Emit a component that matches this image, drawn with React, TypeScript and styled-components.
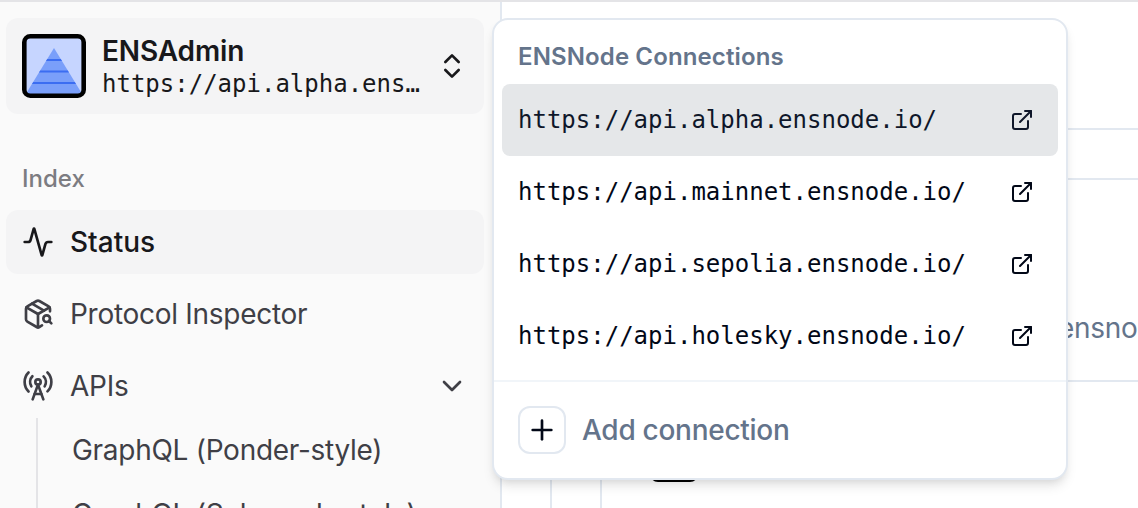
import React from "react";
import styled, { createGlobalStyle } from "styled-components";
import {
  Activity,
  ChevronDown,
  ChevronsUpDown,
  ExternalLink,
  PackageSearch,
  Plus,
  RadioTower,
} from "lucide-react";

const GlobalStyle = createGlobalStyle`
  * { box-sizing: border-box; }
  body {
    margin: 0;
    overflow: hidden;
    background: #fff;
    color: #020817;
    font-family: Inter, "Liberation Sans", sans-serif;
    -webkit-font-smoothing: antialiased;
  }
  svg { flex-shrink: 0; display: block; }
`;

const mono = `"DejaVu Sans Mono", "Liberation Mono", monospace`;

const Page = styled.div`
  position: relative;
  display: flex;
  width: 1138px;
  height: 508px;
  overflow: hidden;
  border-top: 2px solid #e4e4e7;
`;

const Sidebar = styled.aside`
  flex: 0 0 502px;
  padding: 16px 16px 0 6px;
  background: #fafafa;
  border-right: 2px solid #e2e8f0;
  color: #3f3f46;
  overflow: hidden;
`;

const Switcher = styled.div`
  display: flex;
  align-items: center;
  gap: 16px;
  height: 96px;
  padding: 0 16px;
  border-radius: 12px;
  background: #f4f4f5;
  color: #18181b;
`;

const SwitcherText = styled.div`
  flex: 1;
  min-width: 0;
`;

const AppName = styled.div`
  padding-top: 2px;
  font-size: 28px;
  font-weight: 600;
  line-height: 34px;
  letter-spacing: -0.12px;
`;

const CurrentUrl = styled.div`
  max-width: 318px;
  overflow: hidden;
  text-overflow: ellipsis;
  white-space: nowrap;
  font-family: ${mono};
  font-size: 24px;
  line-height: 32px;
`;

const GroupLabel = styled.div`
  display: flex;
  align-items: center;
  height: 64px;
  margin-top: 32px;
  padding: 1px 16px 0;
  font-size: 24px;
  font-weight: 500;
  color: #7c7c81;
`;

const Nav = styled.nav`
  display: flex;
  flex-direction: column;
  gap: 8px;
`;

const NavItem = styled.div<{ $active?: boolean }>`
  display: flex;
  align-items: center;
  gap: 16px;
  height: 64px;
  padding: 0 16px;
  border-radius: 12px;
  font-size: 28px;
  font-weight: ${(p) => (p.$active ? 500 : 400)};
  letter-spacing: ${(p) => (p.$active ? "0" : "-0.28px")};
  color: ${(p) => (p.$active ? "#18181b" : "#3f3f46")};
  background: ${(p) => (p.$active ? "#f4f4f5" : "transparent")};
`;

const NavText = styled.span`
  flex: 1;
`;

const SubNav = styled.div`
  display: flex;
  flex-direction: column;
  gap: 8px;
  margin: -8px 0 0 30px;
  padding: 4px 0 4px 18px;
  border-left: 2px solid #e4e4e7;
`;

const SubItem = styled.div`
  display: flex;
  align-items: center;
  height: 56px;
  padding-left: 16px;
  font-size: 28px;
  letter-spacing: -0.28px;
  white-space: nowrap;
`;

const Main = styled.main`
  flex: 1;
  min-width: 0;
  display: flex;
  flex-direction: column;
`;

const TopBar = styled.header`
  flex: 0 0 128px;
  border-bottom: 2px solid #e2e8f0;
`;

const Content = styled.div`
  flex: 1;
  padding: 48px 0 0 48px;
`;

const Card = styled.section`
  height: 600px;
  border: 2px solid #e2e8f0;
  border-right: 0;
  border-radius: 16px 0 0 0;
`;

const CardHeader = styled.div`
  display: flex;
  align-items: flex-end;
  height: 202px;
  padding: 0 0 32px 506px;
  border-bottom: 2px solid #e2e8f0;
  color: #64748b;
  font-size: 28px;
  line-height: 40px;
  letter-spacing: -0.28px;
  white-space: nowrap;
`;

const CardBody = styled.div`
  padding: 48px 0 0 48px;
`;

const InnerCard = styled.div`
  width: 440px;
  height: 300px;
  padding: 2px 0 0 48px;
  border: 2px solid #e2e8f0;
  border-right: 0;
  border-radius: 16px 0 0 16px;
`;

const Badge = styled.div`
  width: 48px;
  height: 48px;
  border-radius: 8px;
  background: #000;
`;

const Menu = styled.div`
  position: absolute;
  left: 492px;
  top: 16px;
  width: 576px;
  height: 462px;
  padding: 8px;
  border: 2px solid #e2e8f0;
  border-radius: 16px;
  background: #fff;
  box-shadow: 0 8px 12px -2px rgba(0, 0, 0, 0.1), 0 4px 8px -4px rgba(0, 0, 0, 0.1);
`;

const MenuLabel = styled.div`
  display: flex;
  align-items: center;
  height: 56px;
  padding: 1px 16px 0;
  font-size: 24px;
  font-weight: 600;
  letter-spacing: 0.12px;
  color: #64748b;
`;

const MenuItem = styled.div<{ $active?: boolean }>`
  display: flex;
  align-items: center;
  justify-content: space-between;
  height: 72px;
  padding: 0 24px 0 16px;
  border-radius: 8px;
  font-family: ${mono};
  font-size: 24px;
  color: ${(p) => (p.$active ? "#0f172a" : "#020817")};
  background: ${(p) => (p.$active ? "#e5e7e9" : "transparent")};
`;

const Separator = styled.div`
  height: 2px;
  margin: 8px -8px;
  background: #f1f5f9;
`;

const AddItem = styled.div`
  display: flex;
  align-items: center;
  gap: 16px;
  height: 80px;
  padding: 0 16px;
  font-size: 28px;
  font-weight: 500;
  letter-spacing: -0.28px;
  color: #64748b;
`;

const PlusBox = styled.div`
  display: flex;
  align-items: center;
  justify-content: center;
  width: 48px;
  height: 48px;
  border: 2px solid #e2e8f0;
  border-radius: 12px;
  color: #020817;
`;

const Logo = () => (
  <svg width="64" height="64" viewBox="0 0 64 64">
    <rect x="2" y="2" width="60" height="60" rx="6" fill="#c6d5ff" />
    <path d="M32 14 L60.200 60 H3.800 Z" fill="#7a9ffa" />
    <path d="M25.200 25h13.600l1.200 2H24z M18.200 36.500h27.600l1.200 2H17z M11.200 48h41.600l1.200 2H10z" fill="#3b6df2" />
    <rect x="2.300" y="2.300" width="59.400" height="59.400" rx="6" fill="none" stroke="#000" strokeWidth="4.600" />
  </svg>
);

const connections = ["alpha", "mainnet", "sepolia", "holesky"];

export default function App() {
  return (
    <>
      <GlobalStyle />
      <Page>
        <Sidebar>
          <Switcher>
            <Logo />
            <SwitcherText>
              <AppName>ENSAdmin</AppName>
              <CurrentUrl>https://api.alpha.ensnode.io/</CurrentUrl>
            </SwitcherText>
            <ChevronsUpDown size={32} />
          </Switcher>
          <GroupLabel>Index</GroupLabel>
          <Nav>
            <NavItem $active>
              <Activity size={32} />
              <NavText>Status</NavText>
            </NavItem>
            <NavItem>
              <PackageSearch size={32} />
              <NavText>Protocol Inspector</NavText>
            </NavItem>
            <NavItem>
              <RadioTower size={32} />
              <NavText>APIs</NavText>
              <ChevronDown size={32} />
            </NavItem>
            <SubNav>
              <SubItem>GraphQL (Ponder-style)</SubItem>
              <SubItem>GraphQL (Subgraph-style)</SubItem>
            </SubNav>
          </Nav>
        </Sidebar>
        <Main>
          <TopBar />
          <Content>
            <Card>
              <CardHeader>ensnode.io</CardHeader>
              <CardBody>
                <InnerCard>
                  <Badge />
                </InnerCard>
              </CardBody>
            </Card>
          </Content>
        </Main>
        <Menu>
          <MenuLabel>ENSNode Connections</MenuLabel>
          {connections.map((name, i) => (
            <MenuItem key={name} $active={i === 0}>
              <span>{`https://api.${name}.ensnode.io/`}</span>
              <ExternalLink size={24} />
            </MenuItem>
          ))}
          <Separator />
          <AddItem>
            <PlusBox>
              <Plus size={32} />
            </PlusBox>
            <span>Add connection</span>
          </AddItem>
        </Menu>
      </Page>
    </>
  );
}
